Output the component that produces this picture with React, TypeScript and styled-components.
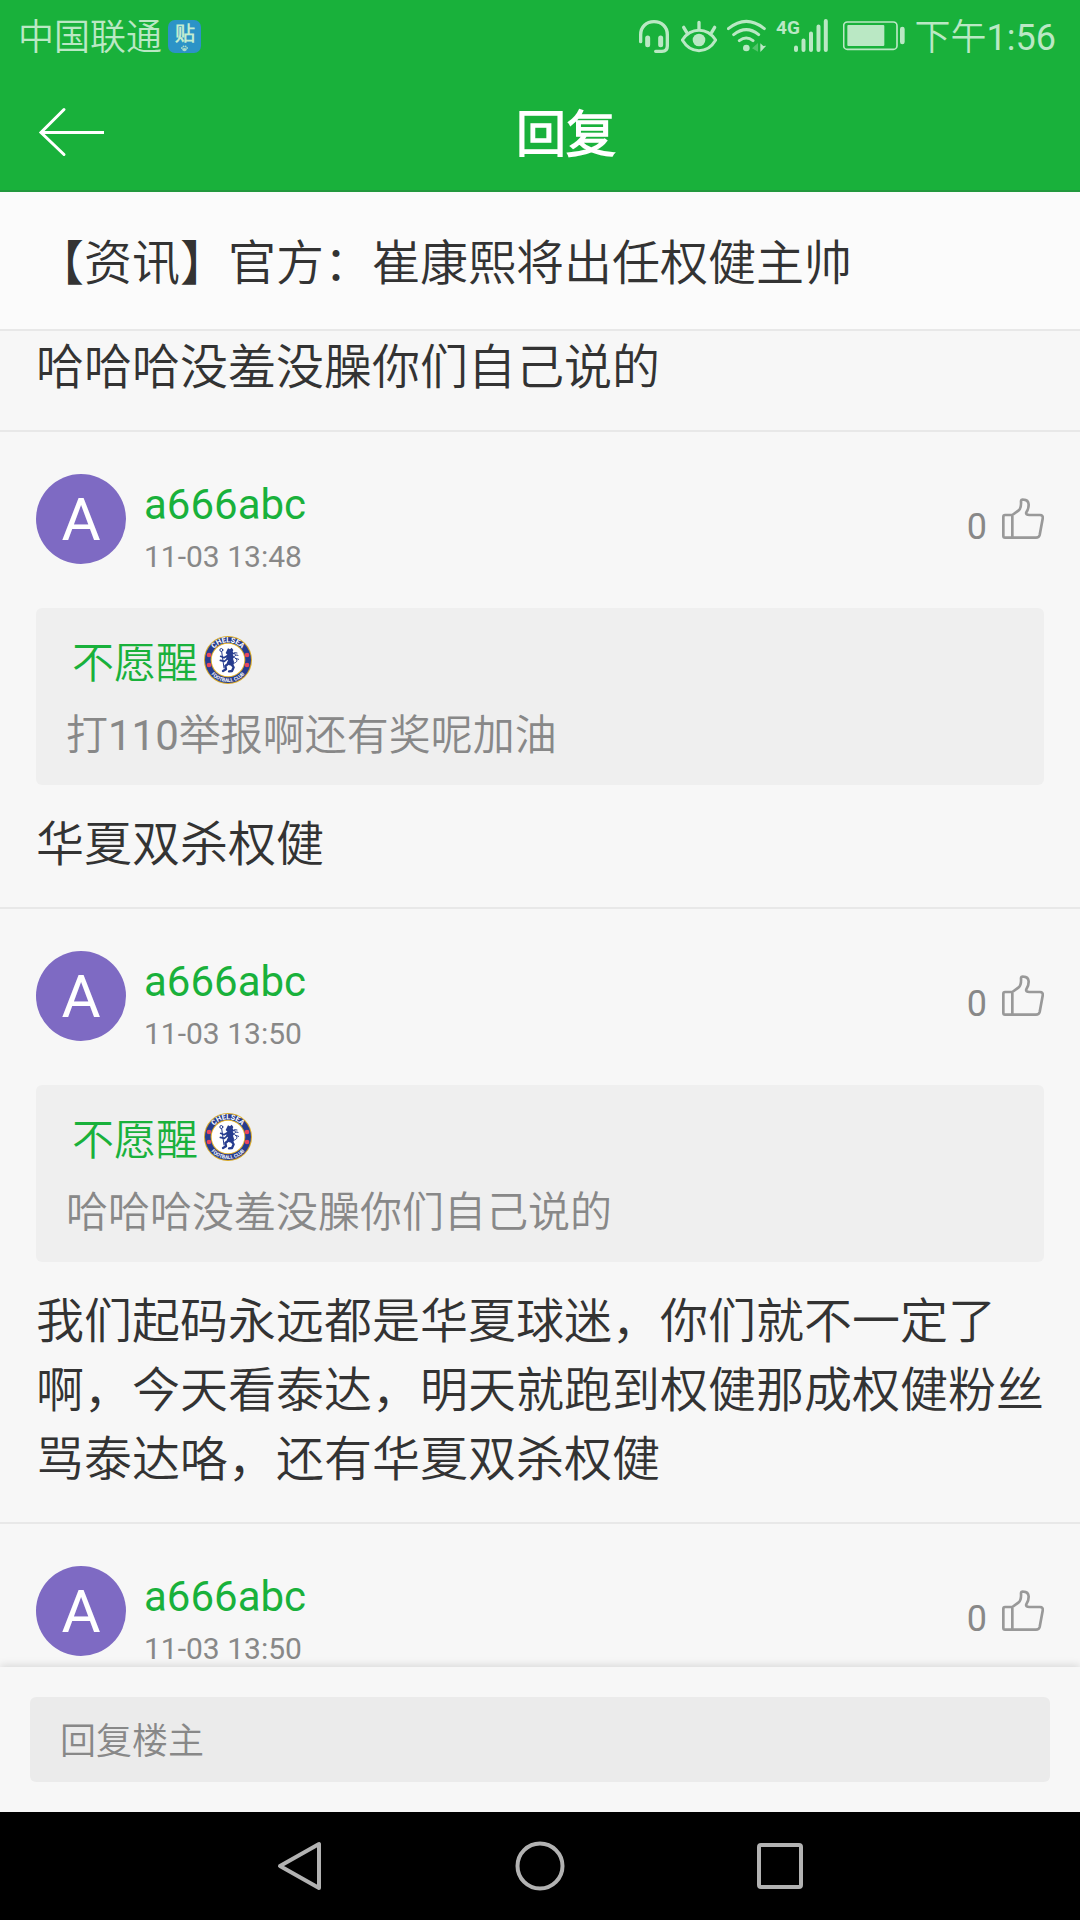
import React from "react";
import styled, { createGlobalStyle } from "styled-components";

const green = "#19b13b";
const statusTint = "#bae8c4";
const line = "#e8e8e8";
const muted = "#888888";

const GlobalStyle = createGlobalStyle`
  * { box-sizing: border-box; }
  body {
    margin: 0;
    background: #f7f7f7;
    font-family: Roboto, "Noto Sans CJK SC DemiLight", "Noto Sans CJK SC", sans-serif;
    color: #333333;
  }
  button, input { font: inherit; color: inherit; border: 0; padding: 0; background: none; }
  h1, h2, h3, p { margin: 0; font-weight: 400; }
  svg { display: block; flex: none; }
`;

const Screen = styled.div`
  display: flex;
  flex-direction: column;
  height: 100vh;
  overflow: hidden;
`;

const Top = styled.header`
  flex: none;
  background: ${green};
  border-bottom: 2px solid #22993d;
`;

const StatusBar = styled.div`
  display: flex;
  align-items: center;
  justify-content: space-between;
  height: 72px;
  padding: 0 24px 0 18px;
  color: ${statusTint};
`;

const StatusGroup = styled.div<{ $gap: number }>`
  display: flex;
  align-items: center;
  gap: ${(p) => p.$gap}px;
`;

const StatusText = styled.span`
  padding-top: 4px;
  font-size: 36px;
  line-height: 42px;
`;

const Toolbar = styled.div`
  display: flex;
  align-items: center;
  height: 118px;
  padding: 2px 56px 0 36px;
  color: #ffffff;
`;

const BackButton = styled.button`
  width: 72px;
  height: 72px;
  display: flex;
  align-items: center;
`;

const ToolbarTitle = styled.h1`
  flex: 1;
  padding-top: 6px;
  text-align: center;
  font-size: 50px;
  line-height: 60px;
  font-weight: 700;
`;

const Topic = styled.h2`
  flex: none;
  padding: 37px 36px 31px;
  background: #fbfbfb;
  border-bottom: 2px solid ${line};
  font-size: 48px;
  line-height: 69px;
`;

const Feed = styled.main`
  flex: 1;
  min-height: 0;
  overflow-y: auto;
  scrollbar-width: none;
`;

const Comment = styled.article<{ $continued?: boolean }>`
  padding: ${(p) => (p.$continued ? 2 : 42)}px 36px 28px;
  border-bottom: 2px solid ${line};
`;

const Author = styled.div`
  display: flex;
  align-items: flex-start;
  gap: 18px;
`;

const Avatar = styled.div`
  width: 90px;
  height: 90px;
  border-radius: 50%;
  background: #7e6ac3;
  color: #ffffff;
  font-size: 60px;
  line-height: 92px;
  text-align: center;
`;

const Identity = styled.div`
  flex: 1;
`;

const UserName = styled.h3`
  color: ${green};
  font-size: 42px;
  line-height: 62px;
`;

const Time = styled.time`
  display: block;
  color: ${muted};
  font-size: 30px;
  line-height: 42px;
`;

const LikeButton = styled.button`
  display: flex;
  align-items: baseline;
  gap: 15px;
  margin-top: 24px;
  color: ${muted};
  font-size: 36px;
  line-height: 42px;
`;

const Quote = styled.blockquote`
  margin: 30px 0 25px;
  padding: 28px 30px 19px;
  border-radius: 6px;
  background: #efefef;
  color: ${muted};
  font-size: 42px;
  line-height: 60px;
`;

const QuoteAuthor = styled.div`
  display: flex;
  align-items: flex-start;
  gap: 6px;
  margin-bottom: 14px;
  padding-left: 6px;
  color: ${green};
  line-height: 56px;
`;

const Body = styled.p`
  font-size: 48px;
  line-height: 69px;
`;

const ReplyBar = styled.form`
  position: relative;
  flex: none;
  padding: 30px;
  background: #f7f7f7;
  box-shadow: 0 -2px 8px rgba(0, 0, 0, 0.12);
`;

const ReplyInput = styled.input`
  display: block;
  width: 100%;
  height: 85px;
  padding: 5px 30px 0;
  border-radius: 6px;
  background: #ebebeb;
  font-size: 36px;
  outline: none;
  &::placeholder { color: ${muted}; opacity: 1; }
`;

const NavBar = styled.nav`
  position: relative;
  flex: none;
  display: grid;
  grid-template-columns: repeat(3, 1fr);
  height: 108px;
  padding: 0 180px;
  background: #000000;
`;

const NavButton = styled.button`
  display: flex;
  align-items: center;
  justify-content: center;
`;

const TiebaIcon = () => (
  <svg width="33" height="33" viewBox="0 0 33 33" aria-hidden="true">
    <rect width="33" height="33" rx="7" fill="#2c93c7" />
    <text x="17" y="21" textAnchor="middle" fontSize="20" fontWeight="700" fill="#c3ecd0">贴</text>
    <g fill="#a9dccb">
      <ellipse cx="16.5" cy="29.6" rx="2.2" ry="1.6" />
      <circle cx="13.9" cy="28" r="0.9" />
      <circle cx="15.5" cy="26.4" r="0.9" />
      <circle cx="17.6" cy="26.4" r="0.9" />
      <circle cx="19.1" cy="28" r="0.9" />
    </g>
  </svg>
);

const HeadsetIcon = () => (
  <svg width="32" height="40" viewBox="57 48 96 120" fill="none" stroke={statusTint} strokeWidth="10" strokeLinecap="round" aria-hidden="true">
    <path d="M62 125V104C62 80 79 65 102 65S142 80 142 104V138Q142 154 126 154H107" />
    <path d="M83 114V134M122 114V134" strokeWidth="15" />
  </svg>
);

const EyeIcon = () => (
  <svg width="36" height="40" viewBox="183 48 108 120" fill="none" stroke={statusTint} strokeWidth="9" strokeLinecap="round" aria-hidden="true">
    <path d="M187 120C200 101 217 91 237 91S274 101 287 120C274 142 257 152 237 152S200 142 187 120Z" strokeLinejoin="round" />
    <path d="M237 67V88M191 82L200 97M284 82L275 97" strokeWidth="10" />
    <circle cx="237" cy="120" r="19" fill={statusTint} stroke="none" />
  </svg>
);

const WifiIcon = () => (
  <svg width="39" height="40" viewBox="321 48 117 120" fill="none" stroke={statusTint} strokeWidth="9" strokeLinecap="round" aria-hidden="true">
    <path d="M325 86Q379 42 433 86M341 104Q379 74 416 104M358 122Q379 106 399 122" />
    <g fill={statusTint} stroke="none">
      <circle cx="379" cy="144" r="10" />
      <path d="M396 145L414 129V155Z" opacity="0.35" />
      <path d="M421 130V156L439 137L430 138Z" />
    </g>
  </svg>
);

const SignalIcon = () => (
  <svg width="57" height="40" viewBox="776 16 57 40" fill={statusTint} aria-hidden="true">
    <text x="776" y="34" fontSize="19" fontWeight="700" fontFamily='"Liberation Sans Narrow", Roboto, sans-serif'>4G</text>
    <path d="M796 47.5V50M803.5 40.5V50M811 33.5V50M818.5 26.5V50M825.8 21V50" stroke={statusTint} strokeWidth="4" strokeLinecap="round" />
  </svg>
);

const BatteryIcon = () => (
  <svg width="62" height="40" viewBox="669 48 186 120" fill={statusTint} aria-hidden="true">
    <rect x="671" y="66" width="160" height="82" rx="11" fill="none" stroke={statusTint} strokeWidth="5" />
    <rect x="682" y="75" width="111" height="63" rx="3" />
    <rect x="840" y="80" width="14" height="53" rx="7" />
  </svg>
);

const BackArrow = () => (
  <svg width="72" height="50" viewBox="36 107 72 50" fill="none" stroke="#fff" strokeWidth="3" aria-hidden="true">
    <path d="M64 109.500L41 132.500L64 154.500" strokeLinecap="round" />
    <path d="M41 132.500H104" />
  </svg>
);

const ThumbIcon = () => (
  <svg width="42" height="41" viewBox="186 84 126 123" fill="none" stroke="#999999" strokeWidth="8" strokeLinejoin="round" aria-hidden="true">
    <path d="M217 135H195Q190 135 190 140V198Q190 203 195 203H288Q297 203 299 195L308 146Q310 135 300 135H268Q256 135 259 127C265 118 266 111 266 104Q265 89 250 89Q243 88 243 94C244 110 240 118 236 121L217 135V203" />
  </svg>
);

const ClubBadge = () => (
  <svg width="48" height="48" viewBox="0 0 144 144" role="img" aria-label="Chelsea Football Club">
    <circle cx="72" cy="72" r="72" fill="#d7a827" />
    <circle cx="72" cy="72" r="69" fill="#263c8f" />
    <circle cx="72" cy="72" r="52" fill="#e0b12c" />
    <circle cx="72" cy="72" r="49" fill="#ffffff" />
    <defs>
      <path id="badge-top" d="M18.500 72A53.500 53.500 0 0 1 125.500 72" />
      <path id="badge-bottom" d="M6 72A66 66 0 0 0 138 72" />
    </defs>
    <g fill="#ffffff" fontWeight="700" textAnchor="middle">
      <text fontSize="22"><textPath href="#badge-top" startOffset="50%">CHELSEA</textPath></text>
      <text fontSize="15"><textPath href="#badge-bottom" startOffset="50%">FOOTBALL CLUB</textPath></text>
    </g>
    <g fill="#e8455d">
      <circle cx="15" cy="57" r="7" />
      <circle cx="15" cy="87" r="7" />
      <circle cx="129" cy="57" r="7" />
      <circle cx="129" cy="87" r="7" />
    </g>
    <g fill="none" stroke="#263c8f" strokeLinecap="round" strokeLinejoin="round">
      <circle cx="52" cy="42" r="4.500" strokeWidth="3" />
      <path d="M53 47L60 96" strokeWidth="3" />
      <path d="M70 59L60 65L50 61M71 68L61 76L49 73" strokeWidth="5" />
      <path d="M74 82L64 90L66 100L57 105M82 84L89 94L84 105L75 106" strokeWidth="7" />
      <path d="M88 82C99 80 102 73 95 68C88 63 92 54 102 58M94 67L104 70M94 57L91 50L99 51" strokeWidth="3" />
    </g>
    <path d="M69 43L72 37L78 40L83 35L88 42L86 47L91 53L86 56L91 63L87 68L90 77L88 90L76 88L68 82L72 73L66 67L70 56L65 51Z" fill="#263c8f" />
  </svg>
);

type CommentData = {
  id: number;
  time?: string;
  quote?: string;
  body?: string;
};

const comments: CommentData[] = [
  { id: 1, body: "哈哈哈没羞没臊你们自己说的" },
  { id: 2, time: "11-03 13:48", quote: "打110举报啊还有奖呢加油", body: "华夏双杀权健" },
  {
    id: 3,
    time: "11-03 13:50",
    quote: "哈哈哈没羞没臊你们自己说的",
    body: "我们起码永远都是华夏球迷，你们就不一定了啊，今天看泰达，明天就跑到权健那成权健粉丝骂泰达咯，还有华夏双杀权健",
  },
  { id: 4, time: "11-03 13:50" },
];

const CommentItem = ({ time, quote, body }: CommentData) => (
  <Comment $continued={!time}>
    {time && (
      <Author>
        <Avatar>A</Avatar>
        <Identity>
          <UserName>a666abc</UserName>
          <Time>{time}</Time>
        </Identity>
        <LikeButton type="button" aria-label="赞 0">
          <span>0</span>
          <ThumbIcon />
        </LikeButton>
      </Author>
    )}
    {quote && (
      <Quote>
        <QuoteAuthor>
          <span>不愿醒</span>
          <ClubBadge />
        </QuoteAuthor>
        <p>{quote}</p>
      </Quote>
    )}
    {body && <Body>{body}</Body>}
  </Comment>
);

export default function App() {
  return (
    <Screen>
      <GlobalStyle />
      <Top>
        <StatusBar>
          <StatusGroup $gap={6}>
            <StatusText>中国联通</StatusText>
            <TiebaIcon />
          </StatusGroup>
          <StatusGroup $gap={10}>
            <HeadsetIcon />
            <EyeIcon />
            <WifiIcon />
            <SignalIcon />
            <BatteryIcon />
            <StatusText>下午1:56</StatusText>
          </StatusGroup>
        </StatusBar>
        <Toolbar>
          <BackButton type="button" aria-label="返回">
            <BackArrow />
          </BackButton>
          <ToolbarTitle>回复</ToolbarTitle>
        </Toolbar>
      </Top>
      <Topic>【资讯】官方：崔康熙将出任权健主帅</Topic>
      <Feed>
        {comments.map((c) => (
          <CommentItem key={c.id} {...c} />
        ))}
      </Feed>
      <ReplyBar onSubmit={(e) => e.preventDefault()}>
        <ReplyInput type="text" placeholder="回复楼主" aria-label="回复楼主" />
      </ReplyBar>
      <NavBar>
        <NavButton type="button" aria-label="返回">
          <svg width="50" height="52" viewBox="0 0 50 52" fill="none" stroke="#b2b2b2" strokeWidth="4" strokeLinejoin="round">
            <path d="M44 4V48L5 26Z" />
          </svg>
        </NavButton>
        <NavButton type="button" aria-label="主页">
          <svg width="50" height="50" viewBox="0 0 50 50" fill="none" stroke="#b2b2b2" strokeWidth="4">
            <circle cx="25" cy="25" r="22.500" />
          </svg>
        </NavButton>
        <NavButton type="button" aria-label="最近任务">
          <svg width="46" height="46" viewBox="0 0 46 46" fill="none" stroke="#b2b2b2" strokeWidth="4">
            <rect x="2" y="2" width="42" height="42" rx="2" />
          </svg>
        </NavButton>
      </NavBar>
    </Screen>
  );
}
